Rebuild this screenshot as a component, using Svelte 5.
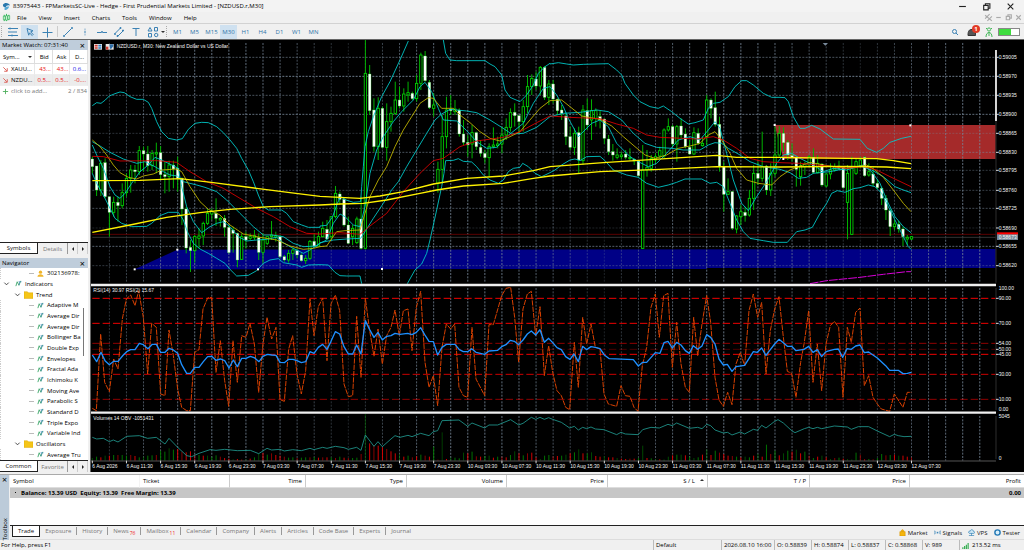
<script lang="ts">
  // chart drawing units are thirds of a pixel; the group is scaled down once
  const STEP = 12.8; // distance between two bars
  const LEFT = 7;
  const RIGHT = 2718;
  const barX = (k: number) => LEFT + k * STEP;

  const menus = ['File', 'View', 'Insert', 'Charts', 'Tools', 'Window', 'Help'];
  const frames = ['M1', 'M5', 'M15', 'M30', 'H1', 'H4', 'D1', 'W1', 'MN'];
  let frame = $state('M30');

  const quotes = [
    { name: 'XAUU...', bid: '43...', ask: '43...', day: '0.6...', up: true },
    { name: 'NZDU...', bid: '0.5...', ask: '0.5...', day: '-0....', up: false }
  ];

  const tree = [
    { level: 2, icon: 'user', text: '302136978:' },
    { level: 0, icon: 'wave', text: 'Indicators' },
    { level: 1, icon: 'folder', text: 'Trend' },
    ...['Adaptive M', 'Average Dir', 'Average Dir', 'Bollinger Ba', 'Double Exp', 'Envelopes', 'Fractal Ada',
      'Ichimoku K', 'Moving Ave', 'Parabolic S', 'Standard D', 'Triple Expo', 'Variable Ind'
    ].map((text) => ({ level: 2, icon: 'wave', text })),
    { level: 1, icon: 'folder', text: 'Oscillators' },
    { level: 2, icon: 'wave', text: 'Average Tru' }
  ];

  const columns = [
    { text: 'Symbol', width: 130 }, { text: 'Ticket', width: 90 }, { text: 'Time', width: 76 },
    { text: 'Type', width: 101 }, { text: 'Volume', width: 100 }, { text: 'Price', width: 101 },
    { text: 'S / L', width: 100, sorted: true }, { text: 'T / P', width: 102 },
    { text: 'Price', width: 100 }, { text: 'Profit', width: 114 }
  ];

  const boxTabs = [
    { text: 'Trade' }, { text: 'Exposure' }, { text: 'History' }, { text: 'News', count: 76 },
    { text: 'Mailbox', count: 11 }, { text: 'Calendar' }, { text: 'Company' }, { text: 'Alerts' },
    { text: 'Articles' }, { text: 'Code Base' }, { text: 'Experts' }, { text: 'Journal' }
  ];
  let boxTab = $state('Trade');

  const priceRows = [
    [52, '0.59005', 0.6], [109, '0.58970', 0.9], [166, '0.58935', 0.6], [223, '0.58900', 0.8],
    [280, '0.58865', 0.35], [337, '0.58830', 0.6], [391, '0.58795', 0.4], [451, '0.58760', 0.45],
    [505, '0.58725', 0.55], [564, '0.58690', 0.25], [619, '0.58655', 0.7], [677, '0.58620', 0.4]
  ] as [number, string, number][];

  const rsiLevels = [
    [775, '90.00', 1], [850, '70.00', 1], [910, '54.00', 0.6], [928, '50.00', 0.3],
    [943, '45.00', 1], [1003, '30.00', 0.85], [1078, '10.00', 0.6]
  ] as [number, string, number][];

  const times = [
    '6 Aug 2026', '6 Aug 11:30', '6 Aug 15:30', '6 Aug 19:30', '6 Aug 23:30', '7 Aug 03:30', '7 Aug 07:30',
    '7 Aug 11:30', '7 Aug 15:30', '7 Aug 19:30', '7 Aug 23:30', '10 Aug 03:30', '10 Aug 07:30', '10 Aug 11:30',
    '10 Aug 15:30', '10 Aug 19:30', '10 Aug 23:30', '11 Aug 03:30', '11 Aug 07:30', '11 Aug 11:30',
    '11 Aug 15:30', '11 Aug 19:30', '11 Aug 23:30', '12 Aug 03:30', '12 Aug 07:30'
  ];

  const gridX = Array.from({ length: 52 }, (_, i) => {
    const x = barX((i + 1) * 4);
    return { x, o: 0.25 + 0.6 * Math.abs(Math.sin((Math.PI * (x - 3)) / 768)) };
  });

  // high, body top, body bottom, low, direction
  const candles = `350 357 380 400 d|378 378 450 468 d|360 370 450 468 u|355 368 470 475 d|470 470 517 590 d|470 487 517 530 u|470 487 497 545 d|430 458 497 505 u|400 415 458 470 u|375 390 415 458 u
375 390 395 430 d|318 332 395 405 u|320 332 342 395 d|318 342 377 395 d|330 340 377 390 u|308 338 342 400 u|318 338 404 420 d|365 404 410 460 d|362 375 410 455 u|362 375 387 445 d
350 385 415 455 d|412 415 507 555 d|500 507 624 640 d|600 622 632 696 d|585 590 632 668 u|565 588 595 625 u|545 550 588 615 u|505 520 550 555 u|505 515 522 540 u|475 520 535 558 d
530 535 540 560 u|525 535 562 590 d|555 562 638 640 d|560 570 580 638 d|578 580 660 682 d|580 590 658 660 u|575 590 600 625 d|580 590 595 600 u|570 587 593 600 u|580 593 637 660 d
580 600 637 670 u|590 590 610 615 u|543 585 590 600 u|575 588 592 605 u|585 590 650 655 d|645 650 660 665 d|630 640 660 668 u|625 630 640 660 u|625 632 645 655 d|640 645 662 665 d
645 655 662 672 u|600 604 655 660 u|580 604 618 620 d|575 590 618 620 u|545 565 590 592 u|540 568 597 598 d|530 530 590 600 u|438 460 530 535 u|455 462 478 495 d|475 478 555 560 d
530 555 610 612 d|555 565 590 615 u|530 537 608 612 u|470 537 625 628 d|0 100 625 628 u|75 102 212 225 d|175 210 320 335 d|172 205 320 360 u|200 205 322 325 d|190 245 322 362 u
200 220 245 275 u|125 180 220 225 u|140 180 198 205 d|145 162 198 215 u|125 158 165 185 u|155 160 176 180 d|105 130 176 185 u|38 45 130 150 u|33 48 122 125 d|120 127 203 207 d
160 195 205 230 u|365 388 430 458 u|225 290 388 430 u|170 210 290 325 u|165 207 212 225 d|180 207 215 225 u|205 210 282 290 d|240 282 307 315 d|285 307 315 350 d|255 278 312 355 u
275 278 320 330 d|300 322 340 350 d|330 340 353 370 d|310 320 353 410 u|262 315 320 325 u|290 312 317 325 u|260 285 312 340 u|235 262 285 300 u|205 218 262 275 u|190 217 227 260 d
225 227 245 280 d|180 200 245 275 u|105 140 200 220 u|103 115 140 165 u|95 117 138 150 d|78 82 138 165 u|78 82 172 180 d|120 132 172 195 u|120 132 177 190 d|175 178 212 225 d
195 210 220 240 d|218 228 290 315 d|260 290 322 330 d|265 280 322 345 u|260 278 360 400 d|195 210 362 375 u|175 212 255 270 d|178 212 240 300 u|205 212 235 260 u|212 230 240 265 d
235 237 295 312 d|285 297 335 345 d|312 335 345 362 d|325 345 352 358 u|335 345 350 358 u|330 342 352 358 d|325 352 356 362 u|355 358 363 375 d|360 363 407 410 d|315 390 625 627 u
330 382 390 410 u|345 355 385 395 u|340 350 360 370 u|320 332 348 355 u|265 270 348 355 u|235 260 270 275 u|255 260 312 320 d|255 260 312 365 u|235 258 285 295 d|265 282 320 325 d
300 322 342 345 d|262 278 342 345 u|265 280 310 315 d|290 310 317 320 u|165 180 290 315 u|175 180 205 235 d|155 203 253 260 d|230 253 378 395 d|365 380 463 515 d|415 455 463 465 u
453 455 565 570 d|525 528 567 580 u|495 515 530 555 u|500 517 527 545 d|450 475 525 530 u|375 400 475 510 u|365 400 415 435 d|275 380 415 425 u|375 378 450 465 d|370 400 450 468 u
260 345 400 410 u|258 280 345 350 u|262 280 308 335 d|300 307 345 360 d|310 347 352 365 d|350 353 388 440 d|365 378 410 437 u|365 372 380 405 u|345 350 375 380 u|325 352 397 402 d
345 370 398 400 u|370 372 435 440 d|400 402 438 442 u|370 390 402 418 u|370 380 390 395 u|362 378 385 390 d|378 383 443 446 d|375 400 487 598 u|350 385 583 585 u|355 365 400 405 u
350 360 380 385 u|348 352 407 410 d|370 395 405 410 u|380 402 430 438 d|418 430 443 447 d|440 445 475 495 d|465 475 510 540 d|508 512 560 588 d|540 552 560 570 u|543 553 567 578 d
560 567 590 618 d|585 592 597 615 u|588 590 597 600 u`
    .split(/[|\n]/)
    .map((row, k) => {
      const [high, top, bottom, low, dir] = row.trim().split(' ');
      return { x: barX(k), high: +high, top: +top, bottom: +bottom, low: +low, up: dir === 'u' };
    });

  // each part is a list of "x y" pairs, shifted by its own start
  function join(parts: [number, string][], dy = 0) {
    return parts
      .flatMap(([dx, text]) => text.split(',').map((p) => {
        const [x, y] = p.trim().split(' ').map(Number);
        return `${x + dx},${y + dy}`;
      }))
      .join(' ');
  }

  const bands = [
    join([
      [0, '7 197,20 188,33 190,46 180,58 168,75 161,90 156,103 158,120 170,140 178,160 178,175 187,185 205,200 245,215 275,235 295,260 300,277 296,295 268,315 250,335 247,355 248,380 260,400 278,420 300,440 325,455 355,475 390,490 425,505 465,520 500,535 510,575 510,590 520,610 545,635 555,655 562,690 562'],
      [690, '0 558,20 556,38 530,52 490,62 470,78 480,100 487,122 485,125 440,130 380,135 320,145 275,160 230,185 170,210 125,240 60,265 3']
    ]),
    join([
      [690, '370 0,377 40,390 60,410 62,495 62,510 72,525 80,545 105,555 150,570 172,600 185,620 165,640 135,655 100,675 80,690 70'],
      [1380, '0 72,25 68,50 72,70 75,100 73,175 71,200 90,215 105,225 130,250 165,270 185,300 200,325 205,340 198,365 215,390 235,415 252,435 248,460 240,475 205,490 190,510 187,535 170,555 140,575 122,590 122,610 135,640 160,665 172'],
      [2070, '0 172,15 173,25 185,40 230,60 265,75 265,95 256,120 267,160 297,240 298,262 325,290 337,310 325,330 307,365 295,393 289']
    ]),
    join([
      [0, '7 400,20 430,45 475,60 505,75 535,95 550,125 560,170 559,185 550,210 527,235 517,265 517,280 540,292 575,310 610,330 627,355 640,380 655,405 670,420 688,440 708,475 706,500 692,520 670,540 660,565 656,580 668,620 675,635 682,655 675'],
      [690, '0 674,25 675,45 697,60 707,80 708,120 708,125 731']
    ]),
    join([
      [690, '262 731,285 690,305 672,320 640,330 600,340 555,350 510,365 440,372 400,377 362,400 361,415 356,430 364,455 366,470 380,490 405,510 420,535 430,550 420,565 395,580 385,600 382,608 370,625 380,645 400,665 410'],
      [1380, '0 398,15 390,35 375,60 360,75 357,90 362,110 350,150 349,165 362,190 390,230 405,265 412,290 430,325 442,355 435,380 427,405 417,455 417,480 430,500 427,520 440,540 490,560 540,580 575,600 595,640 602,670 607'],
      [2070, '0 607,22 607,50 575,75 570,97 562,120 520,140 490,155 460,172 452,195 457,220 446,240 443,265 435,285 440,305 460,325 500,345 540,365 580,385 620,393 628']
    ]),
    join([
      [0, '7 305,30 318,60 337,100 357,140 370,165 365,195 380,220 395,240 405,262 408,280 425,320 435,345 442,380 455,410 480,450 520,490 560,520 585,545 585,580 590,610 610,640 620,680 618'],
      [690, '0 608,40 600,80 597,122 595,135 575,160 535,190 490,215 450,235 425,260 380,290 330,320 280,345 240,365 222,390 208,440 213,470 218,510 240,545 262,575 282,610 280,650 262'],
      [1380, '0 230,40 220,90 217,140 210,175 215,215 240,250 280,285 310,320 322,365 325,400 330,450 330,475 315,495 308,515 310,535 325,570 345,600 365,640 380'],
      [2070, '0 388,30 398,55 415,80 412,100 400,150 395,200 385,240 378,275 390,310 410,345 440,370 450,393 458']
    ]),
    join([
      [0, '7 315,20 345,40 385,60 440,75 465,90 475,105 460,125 430,150 395,175 375,195 352,215 360,265 385,275 440,290 500,310 545,335 578,360 560,380 550,400 545,420 560,445 590,470 603,500 600,530 598,560 592,575 605,600 620,640 640,660 630'],
      [690, '0 610,20 600,40 550,60 522,75 530,100 555,120 560,135 500,150 400,170 330,190 290,220 245,245 215,280 180,300 140,315 127,335 155,355 205,370 240,410 243,440 272,470 305,500 325,530 322,560 290,585 270,610 250,640 190,670 145'],
      [1380, '0 140,20 165,40 200,55 235,85 290,105 270,125 250,150 240,175 260,200 310,240 350,265 365,295 380,320 370,350 340,385 300,420 290,450 300,475 270,495 245,510 265,530 340,550 420,575 490,595 512,620 470,650 425,680 370'],
      [2070, '10 345,35 340,60 355,100 375,130 395,160 385,200 390,250 375,275 395,300 430,320 480,345 530,370 560,393 578']
    ])
  ];

  const yellowThin = join([
    [0, '7 300,30 320,50 345,70 375,90 398,115 412,140 417,160 408,190 402,215 390,260 387,275 395,300 440,330 485,355 508,390 525,420 555,460 582,510 592,560 600,600 618,640 628,670 625'],
    [690, '0 620,20 618,50 575,75 572,120 570,135 520,150 470,175 420,200 380,225 320,250 270,275 230,300 190,325 173,340 175,365 205,400 205,420 225,450 248,480 275,510 295,540 303,570 290,600 275,630 240,660 205'],
    [1380, '0 182,35 180,60 200,95 228,150 238,185 258,220 290,255 320,285 345,315 355,350 345,385 325,420 318,450 310,475 285,495 275,515 300,540 340,560 385,590 420,625 430,665 435'],
    [2070, '0 410,30 390,60 378,90 367,130 375,200 385,260 375,285 390,310 412,340 450,370 490,393 515']
  ]);

  const redThin = join([
    [0, '7 349,40 350,90 363,200 362,260 367,300 395,350 425,400 445,450 475,500 505,550 530,600 560,650 580'],
    [690, '0 582,60 578,120 583,150 558,200 520,250 455,300 400,340 362,370 355,420 320,470 303,550 292,600 275,650 248'],
    [1380, '0 228,60 232,150 236,200 252,250 265,290 285,330 292,440 297,490 290,520 300,560 325,600 355,640 365'],
    [2070, '0 368,60 370,140 378,200 385,250 380,290 390,330 410,393 440']
  ]);

  const yellowThick = [
    join([
      [0, '7 422,150 421,270 416,370 428,500 445,600 458'],
      [690, '0 469,120 475,180 468,250 455,340 432,440 415,550 408,640 392'],
      [1380, '0 380,160 368,360 355,500 346,560 352'],
      [2070, '0 352,200 355,290 356,340 362,393 371']
    ]),
    join([
      [0, '7 577,120 555,230 532,330 518,420 508,540 500'],
      [690, '0 495,60 492,130 490,200 480,300 460,350 450,430 438,550 430,640 415'],
      [1380, '0 408,150 395,330 388,500 380'],
      [2070, '0 381,200 379,320 381,393 386']
    ])
  ];

  const rsiSlow = join([
    [0, '7 213,20 233,33 205,45 230,58 242,71 232,84 232,100 213,110 203,122 197,135 197,148 178,160 182,174 194,187 181,199 181,212 205,225 205,237 193,250 198,263 208,275 242,290 268,301 268,314 250,327 250,340 233,353 218,365 217,378 229,391 225,404 230,417 252,430 228,442 248,455 223,468 223,481 217,494 222,507 233,519 217,532 211,545 213,558 214,570 235,583 236,596 226,609 226,621 230,634 236,647 233,660 203,672 208,685 190,698 181,711 196,723 172,736 143,749 150,762 188,775 210,788 210,800 183,813 210,826 110,839 137,852 160,864 145,877 168,890 157,903 155,915 148'],
    [930, '0 151,23 148,36 152,49 145,62 131,74 152,87 172,100 173,113 213,126 190,139 181,165 181,178 197,190 203,203 203,215 194,228 205,254 211,267 201,293 199,305 188,318 182,331 169,343 172,356 182,369 168,382 150,394 141,407 153,420 137,433 175,446 163,458 176,471 191,484 197,497 218,510 226,522 210,535 233,548 187,560 197,573 188,586 190,600 194,613 213,628 224,700 227,715 246,728 235,740 235,766 206,780 208,792 176,804 172,817 192,830 175,843 183,856 200,868 208,880 185,893 196,906 186'],
    [1842, '8 152,20 160,33 180,45 225,58 243,70 241,84 262,96 248,122 244,148 203,160 205,173 192,186 214,199 197,212 180,225 166,238 176,250 187,263 187,276 200,300 196,314 187,327 205,340 197,353 218,366 203,391 196,403 195,416 220,429 194,442 196,455 186,468 183,481 206,494 204,520 222,545 245,557 259,583 259,597 269,610 268,622 265']
  ], 732);

  const rsiFast = join([
    [0, '7 373,19 380,32 150,44 295,58 323,71 225,84 255,97 105,109 45,122 33,135 65,146 20,160 100,173 270,185 118,199 130,212 330,225 335,237 138,250 215,263 315,275 370,290 380,301 380,314 205,327 197,339 75,353 42,365 40,378 265,391 170,404 290,416 367,429 170,442 295,455 155,468 160,480 118,493 180,506 325,519 180,531 100,545 165,558 130,570 347,583 352,596 195,608 155,621 270,634 330,647 260,660 45,672 155,685 68,698 42,711 230,723 60,736 33,749 80,762 300,775 338,788 335,800 97,813 280,826 42,839 140,852 217,864 135,877 240,890 155,903 130,915 78,928 155'],
    [930, '10 80,24 75,36 200,49 70,62 22,75 235,87 310,100 275,113 365,126 190,139 120,152 135,164 120,177 310,190 335,203 340,216 130,228 285,254 335,267 122,280 122,305 35,318 13,332 10,344 100,356 235,369 75,382 30,394 22,407 155,420 68,433 275,446 185,458 265,471 320,484 335,497 370,509 377,523 175,535 310,548 100,560 180,573 120,586 190,600 195,612 330,625 360,650 367,663 305,676 335,690 337,702 370,714 382,727 245,740 190,753 70,766 30,778 160,791 35,804 28,817 250,830 115,843 240,856 310,868 325,881 100,893 215,906 120'],
    [1842, '8 35,20 115,33 280,45 348,58 367,71 325,84 362,96 240,109 205,122 245,135 80,148 30,161 100,173 55,186 270,199 140,212 75,225 38,237 150,250 262,263 268,276 340,290 235,301 175,314 80,327 295,340 180,353 320,366 180,379 125,391 112,404 130,417 340,430 130,442 175,455 85,468 72,481 305,494 275,507 340,520 360,532 375,557 382,571 330,597 370,610 325,622 325']
  ], 732);

  const obv = join([
    [0, '7 460,20 465,40 463,58 473,70 468,84 474,110 457,148 455,173 463,199 460,225 480,237 463,263 490,290 515,305 518,327 508,360 497,378 499,404 496,442 500,481 499,506 509,531 493,545 498,570 496,583 501,608 497,634 500,660 493,672 497,698 490,711 493,736 487,762 491,775 496,800 490,813 499,826 453,852 487,864 473,877 488,903 465,915 455'],
    [930, '0 460,24 454,36 458,62 448,87 455,100 443,113 440,126 410,177 408,203 427,216 417,254 432,267 423,293 423,332 407,356 423,369 418,394 400,407 406,420 400,433 406,446 401,458 406,484 415,509 432,523 427,535 438,548 430,560 434,573 429,586 435,612 437,650 452,663 445,676 450,715 452,728 437,753 430,778 432,804 421,817 425,830 417,868 433,893 430,906 434'],
    [1842, '8 421,20 425,33 438,58 447,71 445,84 453,109 444,122 450,148 436,161 439,173 424,186 432,212 412,222 407,238 417,263 440,273 446,301 434,314 430,327 434,340 430,353 434,391 426,430 429,442 436,463 428,494 428,520 441,557 458,571 451,583 455,600 458,622 457']
  ], 732);

  // negative = falling volume
  const volumes = [
    8, 12, -10, 15, -15, 17, -17, 17, 15, -17, -14, 10, 12, 15, 16, -17, 30, 27, 37, 33, -35, -27, -25, -28, -18,
    17, -15, 15, 12, 16, -12, -8, -6, 4, -5, -3, 4, -6, 10, 22, -23, 18, -22, -17, -15, -12, 9, 10, -8, 9,
    10, -10, 11, -9, -10, -10, 10, -8, 12, -9, -8, 8, 9, -20, 140, -52, -47, -45, -40, -35, -28, -22, 20, -12, 15,
    -10, -13, 18, -15, -12, 42, -3, 85, -5, 10, 9, 7, 24, -22, 27, -13, -12, 14, 15, -9, 12, -12, -10, 17, 28,
    -22, 16, -22, -24, -10, 5, 15, 17, -13, -14, 15, 18, -22, 25, 34, -22, 22, 25, -14, -12, 14, -10, -10, 8, -6,
    -5, -6, -6, 8, 45, -8, 7, 5, -4, 3, 12, -16, 18, 18, -16, 12, 8, 10, -18, 34, -17, 30, -24, -20,
    -15, -14, 12, -10, 12, 10, -15, 20, -12, 48, -20, 30, -16, 22, 30, -27, 33, -22, 27, -15, 8, -12, 15, -10, 4,
    -8, 9, -6, 5, 3, 24, -18, -4, 5, -4, 8, 20, -16, 17, -18, 15, -15, -12, -10
  ];

  const handles = [[134, 688], [262, 629], [504, 688], [876, 687], [2054, 255], [2080, 357], [2461, 256]];
</script>

{#snippet wave()}
  <svg class="ico" viewBox="0 0 8 8"><path d="M1 7 2.500 2l2 4L6.500 1" fill="none" stroke="#39a567" /><path d="M4 2h3.500M5.500 2l-1 4" fill="none" stroke="#4a8ebd" stroke-width=".8" /></svg>
{/snippet}

<div class="terminal">
  <header class="title">
    <svg class="logo" viewBox="0 0 10 10"><path d="M1 3c2-3 7-2 8 1-3-1-4 0-5 2C2 6 1 5 1 3Z" fill="#2a78ad" /><path d="M3 9c-1-3 1-4 5-4-1 3-3 4-5 4Z" fill="#55a9d6" /></svg>
    <h1>83975443 - FPMarketsSC-Live - Hedge - First Prudential Markets Limited - [NZDUSD.r,M30]</h1>
    <div class="win">
      <button aria-label="Minimize"><svg viewBox="0 0 8 8"><path d="M1 4h6" /></svg></button>
      <button aria-label="Restore"><svg viewBox="0 0 8 8"><path d="M1.500 3h4v4h-4zM3 3V1.500h4V5.500H5.500" /></svg></button>
      <button aria-label="Close"><svg viewBox="0 0 8 8"><path d="M1.500 1.500l5 5M6.500 1.500l-5 5" /></svg></button>
    </div>
  </header>

  <nav class="menu">
    <svg class="logo" viewBox="0 0 10 10"><path d="M2.500 2v7M5 1v8M7.500 2v6" stroke="#22b14c" /><path d="M1.500 3.500h2v4h-2zM4 3h2v5H4zM6.500 3h2v4h-2z" fill="#e8f7ec" stroke="#22b14c" stroke-width=".7" /></svg>
    {#each menus as item}<button>{item}</button>{/each}
    <div class="win small">
      <button aria-label="Layout"><svg viewBox="0 0 8 8"><path d="M1 2l6 5M1 5l4-4M3 7l4-4" /></svg></button>
      <button aria-label="Minimize chart"><svg viewBox="0 0 8 8"><path d="M2 4h4" /></svg></button>
      <button aria-label="Restore chart"><svg viewBox="0 0 8 8"><path d="M2 3h3v3H2zM3.500 3V1.500h3v3H5" /></svg></button>
      <button aria-label="Close chart"><svg viewBox="0 0 8 8"><path d="M2 2l4 4M6 2l-4 4" /></svg></button>
    </div>
  </nav>

  <div class="toolbar">
    <i class="grip"></i>
    <button class="tool" aria-label="Market depth"><svg viewBox="0 0 12 12"><path d="M1 2.500h10M1 6h7M1 9.500h10M3 1.500v2M9 5v2M5 8.500v2" /></svg></button>
    <button class="tool on" aria-label="Cursor"><svg viewBox="0 0 12 12"><path d="M3 2.500l6 2.300-2.300 1 2.500 2.700-1 1L5.600 7 4.700 9.200z" /></svg></button>
    <button class="tool" aria-label="Crosshair"><svg viewBox="0 0 12 12"><path d="M6.500 1.500v10M1.500 6.500h10" /></svg></button>
    <i class="split"></i>
    <button class="tool" aria-label="Trend line"><svg viewBox="0 0 12 12"><path d="M2.500 9.500l7-7M1.500 9.500h1v1h-1zM9.500 1.500h1v1h-1z" /></svg></button>
    <button class="tool" aria-label="Vertical line"><svg viewBox="0 0 12 12"><path d="M6 2.500v2M5.500 5.500h1v1h-1zM6 7.500v2" stroke-opacity=".6" /></svg></button>
    <button class="tool" aria-label="Horizontal line"><svg viewBox="0 0 12 12"><path d="M1 6.500h4M7 6.500h4M5.500 5.500h1v1h-1z" /></svg></button>
    <button class="tool" aria-label="Channel"><svg viewBox="0 0 12 12"><path d="M2 7.500l5.500-5.500M5 10l5.500-5.500M1.500 7.500h1v1h-1zM7 1.500h1v1H7zM4 9.500h1v1H4zM9.500 4h1v1h-1z" /></svg></button>
    <button class="tool" aria-label="Text"><svg viewBox="0 0 12 12"><path d="M2.500 2.500h7M6 2.500V10" /></svg></button>
    <button class="tool" aria-label="Objects"><svg viewBox="0 0 12 12"><path d="M1 5l2-3.500L5 5zM7.500 1.500h3V5h-3zM1.500 7.500h3V11h-3z" /><circle cx="9.200" cy="9" r="1.700" /></svg></button>
    <i class="caret"></i>
    <i class="grip"></i>
    {#each frames as f}
      <button class="tool" class:on={frame === f} onclick={() => (frame = f)}>{f}</button>
    {/each}
    <div class="right">
      <button aria-label="Search"><svg viewBox="0 0 12 12"><circle cx="5.500" cy="5.500" r="2" /><path d="M7 7l2 2" /></svg></button>
      <button class="bell" aria-label="Notifications"><svg viewBox="0 0 12 12"><path d="M2 9.500C2 5 3 3.500 6 3.500s3.500 2 3.500 6z" fill="#555" stroke="#333" /></svg><b>1</b></button>
      <svg viewBox="0 0 12 12"><circle cx="6" cy="3.500" r="1.600" stroke="#45b85a" /><path d="M3 11c0-6 6-6 6 0M6 6v4M3 2l1 1M9 2L8 3" stroke="#45b85a" /></svg>
      <span class="battery"><i></i></span>
    </div>
  </div>

  <div class="work">
    <aside>
      <section class="panel">
        <h2>Market Watch: 07:31:40 <button aria-label="Close market watch">×</button></h2>
        <table class="quotes">
          <colgroup><col class="wide" /><col /><col /><col /></colgroup>
          <thead><tr><th>Sym... <i class="caret"></i></th><th>Bid</th><th>Ask</th><th>D...</th></tr></thead>
          <tbody>
            {#each quotes as q, i}
              <tr class:odd={i === 1}>
                <td><svg class="ico" viewBox="0 0 8 8"><path d="M1.500 1.500l4 4M6 2.500V6H2.500" fill="none" stroke="#d9534a" /></svg>{q.name}</td>
                <td class="red">{q.bid}</td><td class="red">{q.ask}</td><td class:red={!q.up} class:blue={q.up}>{q.day}</td>
              </tr>
            {/each}
            <tr class="add">
              <td colspan="2"><svg class="ico" viewBox="0 0 8 8"><path d="M4 1v6M1 4h6" stroke="#4bae5a" /></svg>click to add...</td>
              <td colspan="2">2 / 834</td>
            </tr>
          </tbody>
        </table>
        <div class="tabs">
          <button class="on">Symbols</button><button>Details</button>
          <button class="arrow" aria-label="Scroll left"><i></i></button><button class="arrow next" aria-label="Scroll right"><i></i></button>
        </div>
      </section>

      <section class="panel">
        <h2>Navigator <button aria-label="Close navigator">×</button></h2>
        <div class="browse">
          <ul>
            {#each tree as node}
              <li class="l{node.level}">
                {#if node.level < 2}
                  <svg class="ico" viewBox="0 0 8 8"><path d="M1.500 3L4 5.500 6.500 3" fill="none" stroke="#333" /></svg>
                {:else}
                  <i class="twig"></i>
                {/if}
                {#if node.icon === 'folder'}
                  <svg class="ico big" viewBox="0 0 8 8"><path d="M0 1.500h3l1 1h4V7.500H0z" fill="#f5c518" stroke="#d9a400" stroke-width=".4" /></svg>
                {:else if node.icon === 'user'}
                  <svg class="ico" viewBox="0 0 8 8"><circle cx="4" cy="2.500" r="1.900" fill="#f0b429" /><path d="M.5 7.800c0-4 7-4 7 0z" fill="#f0b429" /></svg>
                {:else}
                  {@render wave()}
                {/if}
                <span>{node.text}</span>
              </li>
            {/each}
          </ul>
          <i class="thumb"></i>
        </div>
        <div class="tabs">
          <button class="on">Common</button><button>Favorite</button>
          <button class="arrow" aria-label="Scroll left"><i></i></button><button class="arrow next" aria-label="Scroll right"><i></i></button>
        </div>
      </section>
    </aside>

    <main>
      <svg class="chart" viewBox="1 0 933 432" role="img" aria-label="NZDUSD.r M30 chart">
        <g transform="scale(.33333)">
          <polygon points="134,688 262,629 {RIGHT},627 {RIGHT},684 1850,684 1850,687" fill="#000086" />
          <polygon points="2054,255 {RIGHT},255 {RIGHT},357 2080,357" fill="#a52a2a" />

          {#each gridX as g}
            <path class="grid" d="M{g.x} 9V728M{g.x} 744V1110M{g.x} 1128V1262" opacity={g.o} />
          {/each}
          {#each priceRows as [y, , o]}
            <path class="grid" d="M{LEFT} {y}H{RIGHT}" opacity={o} />
          {/each}
          <path d="M{LEFT} 583H{RIGHT}" stroke="#5a0000" stroke-width="3" />
          <path d="M{LEFT} 592H{RIGHT}" stroke="#333" stroke-width="3" />

          {#each candles as c}
            <path d="M{c.x} {c.high}V{c.low}" stroke="#00b400" stroke-width="3" />
            {#if c.up}
              <rect x={c.x - 3.500} y={c.top} width="7" height={Math.max(3, c.bottom - c.top)} fill="#000" stroke="#00dc00" stroke-width="2.500" />
            {:else}
              <rect x={c.x - 4} y={c.top} width="8" height={Math.max(4, c.bottom - c.top)} fill="#fff" stroke="#3ddc3d" stroke-width="1" />
            {/if}
          {/each}

          {#each bands as points}<polyline {points} stroke="#00cccc" stroke-width="2.600" />{/each}
          <polyline points={yellowThin} stroke="#c4b800" stroke-width="2.600" />
          <polyline points={redThin} stroke="#dc0000" stroke-width="2.600" />
          {#each yellowThick as points}<polyline {points} stroke="#fff200" stroke-width="4" />{/each}
          <polyline points="2160,731 2210,722 2310,712 2380,703 2450,695 2463,695" stroke="#d800d8" stroke-width="3" stroke-dasharray="26 3" />
          {#each handles as [x, y]}<rect x={x - 3} y={y - 3} width="6" height="6" fill="#fff" />{/each}
          <path d="M2198 9h16l-8 8z" fill="#778899" />

          <!-- oscillator pane -->
          {#each rsiLevels as [y, , o]}
            <path d="M{LEFT} {y}H{RIGHT}" stroke="#f00000" stroke-width="3" stroke-dasharray="22 9" opacity={o} />
          {/each}
          <polyline points={rsiFast} stroke="#d84000" stroke-width="3" stroke-dasharray="16 3" />
          <polyline points={rsiSlow} stroke="#1e90ff" stroke-width="4" />

          <!-- volume pane -->
          {#each volumes as v, k}
            <path d="M{barX(k)} 1262v{-Math.abs(v)}" stroke={v < 0 ? '#e00000' : '#007800'} stroke-width="3" opacity={Math.abs(v) > 80 ? 0.5 : k % 3 ? 0.95 : 0.6} />
          {/each}
          <polyline points={obv} stroke="#1f968c" stroke-width="2.600" />

          <path d="M3 735H{RIGHT}M3 1118H{RIGHT}" stroke="#f0f0f0" stroke-width="7" />
          <path d="M{RIGHT} 30V243" stroke="#fff" stroke-width="5" />
          <path d="M3 1263H{RIGHT}" stroke="#555" stroke-width="3" />
          <path d="M{RIGHT} 243V728M{RIGHT} 744V1110M{RIGHT} 1128V1258" stroke="#222" stroke-width="4" />

          <g class="label">
            {#each [...priceRows, ...rsiLevels] as [y, text]}
              <path d="M{RIGHT} {y}h8" stroke="#ddd" stroke-width="3" />
              <text x={RIGHT + 8} y={y + 5}>{text}</text>
            {/each}
            <text x={RIGHT + 8} y="751">100.00</text>
            <text x={RIGHT + 8} y="1112">0.00</text>
            <text x={RIGHT + 8} y="1135">5045</text>
            <text x={RIGHT + 8} y="1260">0</text>
            <rect x="2721" y="577" width="63" height="8" fill="#f00" />
            <rect x="2721" y="583" width="63" height="17" fill="#778899" />
            <text x={RIGHT + 8} y="597">0.58673</text>
            {#each times as time, i}
              <path d="M{barX(i * 8)} 1262v8" stroke="#ddd" stroke-width="3" />
              <text x={barX(i * 8)} y="1283">{time}</text>
            {/each}
            <text x="80" y="25">NZDUSD.r, M30:  New Zealand Dollar vs US Dollar</text>
            <text x="10" y="755">RSI(14) 30.97 RSI(2) 15.67</text>
            <text x="10" y="1140">Volumes 14 OBV -1051431</text>
          </g>
          <g>
            <rect x="12" y="12" width="24" height="17" fill="#e8e8e8" />
            <path d="M14 17h9M14 24h9" stroke="#d33b2f" stroke-width="5" />
            <path d="M25 17h9M25 24h9" stroke="#2f7fc1" stroke-width="5" />
            <rect x="47" y="12" width="24" height="17" fill="#e8e8e8" />
            <path d="M48 20h7v9h-7z" fill="#d33b2f" />
            <path d="M58 13h12v5l-6 8h-4z" fill="#2f6fa8" />
          </g>
        </g>
      </svg>
    </main>
  </div>

  <section class="toolbox">
    <div class="side"><button aria-label="Close toolbox">×</button><span>Toolbox</span></div>
    <div class="content">
      <table class="trade">
        <colgroup>{#each columns as c}<col style="width: {c.width}px" />{/each}</colgroup>
        <thead>
          <tr>{#each columns as c}<th>{c.text}{#if c.sorted}<i class="caret up"></i>{/if}</th>{/each}</tr>
        </thead>
        <tbody>
          <tr><td colspan="9"><i class="dot"></i>Balance: 13.39 USD&nbsp; Equity: 13.39&nbsp; Free Margin: 13.39</td><td>0.00</td></tr>
        </tbody>
      </table>
      <div class="boxtabs">
        {#each boxTabs as tab}
          <button class:on={boxTab === tab.text} onclick={() => (boxTab = tab.text)}>{tab.text}{#if tab.count}<sub>{tab.count}</sub>{/if}</button>
        {/each}
        <div class="links">
          <a href="#market"><svg class="ico" viewBox="0 0 8 8"><path d="M1 3h6v5H1zM2.500 3c0-3 3-3 3 0" fill="#f5b60d" stroke="#d99500" stroke-width=".7" /></svg>Market</a>
          <a href="#signals"><svg class="ico" viewBox="0 0 8 8"><circle cx="4" cy="4" r="1" fill="#3d86b8" /><path d="M2 2.500q-1 1.500 0 3M6 2.500q1 1.500 0 3M.7 1.800q-1.200 2.200 0 4.400M7.300 1.800q1.200 2.200 0 4.400" fill="none" stroke="#3d86b8" stroke-width=".7" /></svg>Signals</a>
          <a href="#vps"><svg class="ico" viewBox="0 0 8 8"><path d="M1.500 5C-.5 3.500 1.500 2 2.500 2.500 3 0 6 .5 6 2.500c2 0 2 2.500.5 2.500zM4 5v2.500M1 7.500h6" fill="#cfe8f7" stroke="#2f7fb5" stroke-width=".8" /></svg>VPS</a>
          <a href="#tester"><svg class="ico" viewBox="0 0 8 8"><circle cx="4" cy="4" r="3" fill="#d9effa" stroke="#2378b5" stroke-width="1.600" /></svg>Tester</a>
        </div>
      </div>
    </div>
  </section>

  <footer>
    <span class="help">For Help, press F1</span>
    <span class="profile">Default</span>
    <span class="date">2026.08.10 16:00</span>
    <span>O: 0.58839</span>
    <span>H: 0.58874</span>
    <span>L: 0.58837</span>
    <span>C: 0.58868</span>
    <span>V: 989</span>
    <span class="ping"><svg class="ico" viewBox="0 0 8 8"><path d="M1 8V6M3 8V4.500M5 8V3M7 8V1" stroke="#2eaa4a" stroke-width="1.300" /></svg>213.52 ms</span>
  </footer>
</div>

<style>
  .terminal {
    display: flex;
    flex-direction: column;
    min-height: 100vh;
    background: #f0f0f0;
    color: #000;
    font: 6px/8px "Open Sans", "Noto Sans", sans-serif;
    overflow: hidden;
  }
  button {
    padding: 0;
    border: 0;
    background: none;
    color: inherit;
    font: inherit;
  }
  h1,
  h2 {
    margin: 0;
    font-size: 6px;
    font-weight: 400;
  }
  .ico {
    width: 7px;
    height: 7px;
    flex: none;
  }

  .title,
  .menu {
    display: flex;
    align-items: center;
    height: 12px;
    background: #f3f3f3;
  }
  .menu {
    height: 11px;
    background: #f0f0f0;
    border-bottom: 1px solid #d2d2d2;
  }
  .logo {
    width: 9px;
    height: 9px;
    margin: 0 2px;
  }
  .menu button {
    margin: 0 8px 0 4px;
  }
  .win {
    display: flex;
    margin-left: auto;
    gap: 15px;
    padding-right: 9px;
  }
  .win svg {
    display: block;
    width: 9px;
    height: 9px;
    fill: none;
    stroke: #222;
    stroke-width: 1;
  }
  .win.small {
    gap: 1px;
    padding-right: 1px;
  }
  .win.small button {
    margin: 0;
  }
  .win.small svg {
    stroke: #aaa;
  }

  .toolbar {
    display: flex;
    align-items: center;
    height: 15px;
    border-bottom: 1px solid #666;
  }
  .toolbar svg {
    display: block;
    width: 12px;
    height: 12px;
    margin: 0 auto;
    fill: none;
    stroke: #3c82b4;
  }
  .tool {
    width: 17px;
    height: 14px;
    color: #2f74a8;
  }
  .tool.on {
    background: #cfe1f0;
  }
  .grip {
    width: 1px;
    height: 11px;
    margin: 0 1px;
    border-left: 1px dotted #aaa;
  }
  .split {
    height: 11px;
    margin: 0 1px 0 2px;
    border-left: 1px solid #ccc;
  }
  .caret {
    display: inline-block;
    border: 2px solid transparent;
    border-top-color: #333;
    border-bottom: 0;
  }
  .caret.up {
    margin: 0 0 2px 5px;
    border-top: 0;
    border-bottom: 2px solid #333;
  }
  .right {
    display: flex;
    align-items: center;
    gap: 1px;
    margin-left: auto;
    padding-right: 4px;
  }
  .right svg {
    margin: 0 2px;
  }
  .bell {
    position: relative;
  }
  .bell b {
    position: absolute;
    top: -1px;
    right: 0;
    width: 8px;
    border-radius: 4px;
    background: #e23b26;
    color: #fff;
  }
  .battery {
    width: 20px;
    height: 6px;
    border: 1px solid #888;
    background: #fff;
  }
  .battery i {
    display: block;
    width: 60%;
    height: 100%;
    background: #3fdc3f;
  }

  .work {
    display: grid;
    grid-template-columns: 91px 1fr;
  }
  aside {
    display: flex;
    flex-direction: column;
    gap: 4px;
    min-height: 0;
    padding-right: 2px;
    border-right: 1px solid #666;
  }
  .panel {
    display: flex;
    flex: 1 1 0;
    flex-direction: column;
    min-height: 0;
    background: #fff;
  }
  h2 {
    display: flex;
    justify-content: space-between;
    padding: 0 3px 0 2px;
    background: #bfcddb;
    line-height: 10px;
  }
  h2 button,
  .side button {
    font-size: 9px;
    line-height: 9px;
  }
  table {
    width: 100%;
    border-spacing: 0;
    table-layout: fixed;
  }
  th,
  td {
    padding: 0 3px;
    font-weight: 400;
    white-space: nowrap;
  }
  .quotes .wide {
    width: 40%;
  }
  .quotes th {
    height: 13px;
    border-right: 1px solid #ddd;
    border-bottom: 1px solid #ddd;
    text-align: right;
  }
  .quotes th:first-child {
    text-align: left;
  }
  .quotes th .caret {
    margin-left: 7px;
    vertical-align: middle;
  }
  .quotes td {
    height: 10px;
    padding: 0 1px 0 0;
    border-right: 1px solid #e8e8e8;
    border-bottom: 1px solid #eee;
    line-height: 8px;
    text-align: right;
  }
  .quotes td:first-child {
    padding-left: 2px;
    text-align: left;
  }
  .quotes .ico {
    margin-right: 2px;
    vertical-align: middle;
  }
  .odd td {
    background: #ececec;
  }
  .quotes .add td {
    border: 0;
    color: #777;
  }
  .red {
    color: #e81010;
  }
  .blue {
    color: #1010e8;
  }
  .tabs {
    display: flex;
    flex: none;
    height: 11px;
    margin-top: auto;
    border-top: 1px solid #222;
    background: #f0f0f0;
  }
  .tabs button {
    flex: none;
    width: 30px;
    border-right: 1px solid #999;
    color: #777;
  }
  .tabs .on {
    width: 38px;
    border-right-color: #222;
    border-bottom: 1px solid #222;
    background: #fff;
    color: #111;
  }
  .tabs .arrow {
    width: 10px;
    border-color: #ccc;
  }
  .arrow i {
    display: inline-block;
    border: 2px solid transparent;
    border-right-color: #222;
    border-left: 0;
  }
  .next i {
    border-right: 0;
    border-left: 2px solid #222;
  }

  .browse {
    display: flex;
    flex: 1;
    min-height: 0;
  }
  ul {
    display: grid;
    flex: 1;
    grid-auto-rows: 1fr;
    margin: 0;
    padding: 0;
    list-style: none;
  }
  li {
    display: flex;
    align-items: center;
    gap: 3px;
    padding-left: 3px;
    white-space: nowrap;
  }
  .l1 {
    padding-left: 14px;
  }
  .l2 {
    padding-left: 28px;
    border-left: 1px dotted #ccc;
  }
  .l0 .ico + .ico {
    margin-left: 2px;
  }
  .big {
    width: 9px;
    height: 9px;
  }
  .twig {
    flex: none;
    width: 5px;
    border-top: 1px solid #bbb;
  }
  .thumb {
    width: 1px;
    height: 48px;
    margin: 40px 4px 0 0;
    background: #777;
  }

  main {
    min-width: 0;
    background: #000;
  }
  .chart {
    display: block;
    width: 100%;
    background: #000;
  }
  .chart polyline {
    fill: none;
    stroke-linejoin: round;
  }
  .grid {
    stroke: #778899;
    stroke-width: 3;
    stroke-dasharray: 6 4;
  }
  .label {
    fill: #f4f4f4;
    font: 15px "Liberation Sans", Arial, sans-serif;
  }

  .toolbox {
    display: flex;
    flex: 1;
    margin-top: 2px;
    border-top: 1px solid #aaa;
  }
  .side {
    display: flex;
    flex-direction: column;
    align-items: center;
    justify-content: space-between;
    width: 9px;
    margin-right: 1px;
    background: #bccbd9;
  }
  .side span {
    writing-mode: vertical-rl;
    transform: rotate(180deg);
  }
  .content {
    display: flex;
    flex: 1;
    flex-direction: column;
    min-width: 0;
    background: #fff;
  }
  .trade th {
    height: 12px;
    border-right: 1px solid #ccc;
    border-bottom: 1px solid #ddd;
    text-align: right;
  }
  .trade th:nth-child(-n + 2) {
    text-align: left;
  }
  .trade th:first-child {
    border-right-color: #f4f4f4;
  }
  .trade th:last-child {
    border-right: 0;
  }
  .trade td {
    height: 10px;
    background: #c6c6c6;
    font-weight: 700;
  }
  .trade td:last-child {
    text-align: right;
  }
  .dot {
    display: inline-block;
    width: 1px;
    height: 1px;
    margin: 0 5px 2px 2px;
    background: #111;
  }
  .boxtabs {
    display: flex;
    height: 13px;
    margin-top: auto;
    border-top: 1px solid #222;
    border-bottom: 1px solid #ddd;
    background: #f0f0f0;
  }
  .boxtabs button {
    height: 8px;
    margin-top: 1px;
    padding: 0 5px;
    border-right: 1px solid #999;
    color: #777;
    line-height: 8px;
  }
  .boxtabs .on {
    height: 11px;
    margin: 0 0 0 2px;
    border: 1px solid #222;
    border-top: 0;
    background: #fff;
    color: #111;
  }
  .boxtabs button:nth-child(12) {
    border-right: 0;
  }
  .boxtabs sub {
    margin-left: 1px;
    color: #e22;
    font-size: 5px;
    line-height: 5px;
  }
  .links {
    display: flex;
    align-items: center;
    gap: 6px;
    margin-left: auto;
    padding-right: 4px;
  }
  .links a {
    display: flex;
    align-items: center;
    gap: 2px;
    color: #111;
    text-decoration: none;
  }

  footer {
    display: flex;
    height: 10px;
    line-height: 10px;
  }
  footer span {
    box-sizing: border-box;
    width: 37px;
    padding-left: 2px;
    border-left: 1px solid #bbb;
    white-space: nowrap;
  }
  footer .help {
    flex: 1;
    padding-left: 1px;
    border: 0;
  }
  footer .profile {
    width: 68px;
  }
  footer .date {
    width: 53px;
  }
  footer .ping {
    width: 65px;
  }
  .ping .ico {
    margin-right: 3px;
    vertical-align: middle;
  }
</style>
